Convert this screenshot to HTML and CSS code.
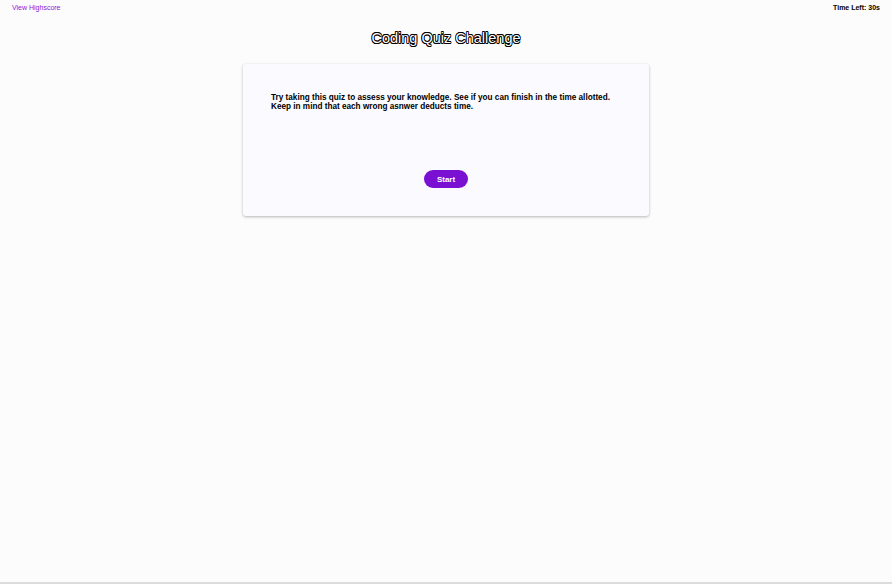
FILE: index.html
```html
<!DOCTYPE html>
<html>
<head>
<meta charset="utf-8">
<link rel="stylesheet" href="styles.css">
</head>
<body>
<div class="page">
  <header class="topbar">
    <a class="highscore" href="#">View Highscore</a>
    <div class="timer">Time Left: 30s</div>
  </header>
  <h1 class="title">Coding Quiz Challenge</h1>
  <main class="card">
    <p class="intro">Try taking this quiz to assess your knowledge. See if you can finish in the time allotted. Keep in mind that each wrong asnwer deducts time.</p>
    <div class="actions">
      <button class="start">Start</button>
    </div>
  </main>
</div>
</body>
</html>
```

FILE: styles.css
```css
html, body {
  margin: 0;
  padding: 0;
  height: 100%;
}
body {
  background: #fcfcfc;
  font-family: "Liberation Sans", Arial, sans-serif;
}
.page {
  height: 582px;
  border-bottom: 2px solid #dcdcdc;
  display: flex;
  flex-direction: column;
  align-items: center;
}
.topbar {
  align-self: stretch;
  display: flex;
  justify-content: space-between;
  align-items: center;
  padding: 3px 12px 0 12px;
  height: 8px;
  font-size: 7px;
}
.highscore {
  color: #8a1ad6;
  text-decoration: none;
}
.timer {
  font-weight: bold;
  color: #000;
}
.title {
  margin: 19px 0 0 0;
  font-size: 14.5px;
  font-weight: normal;
  color: #fff;
  text-shadow: -0.8px 0 #000, 0.8px 0 #000, 0 -0.8px #000, 0 0.8px #000,
    -0.6px -0.6px #000, 0.6px 0.6px #000, -0.6px 0.6px #000, 0.6px -0.6px #000;
  line-height: 17px;
}
.card {
  margin-top: 17px;
  width: 350px;
  height: 117px;
  padding: 29px 28px 6px 28px;
  background: #fbfaff;
  border-radius: 3px;
  box-shadow: 0 1px 3px rgba(0,0,0,0.28);
  display: flex;
  flex-direction: column;
}
.intro {
  margin: 0;
  font-size: 8.2px;
  font-weight: bold;
  line-height: 9px;
  color: #000;
}
.actions {
  display: flex;
  justify-content: center;
  margin-top: 59px;
}
.start {
  width: 44px;
  height: 18px;
  border: none;
  border-radius: 9px;
  background: #7a10d2;
  color: #fff;
  font-family: "Liberation Sans", Arial, sans-serif;
  font-size: 8px;
  font-weight: bold;
  padding: 0;
}
```
